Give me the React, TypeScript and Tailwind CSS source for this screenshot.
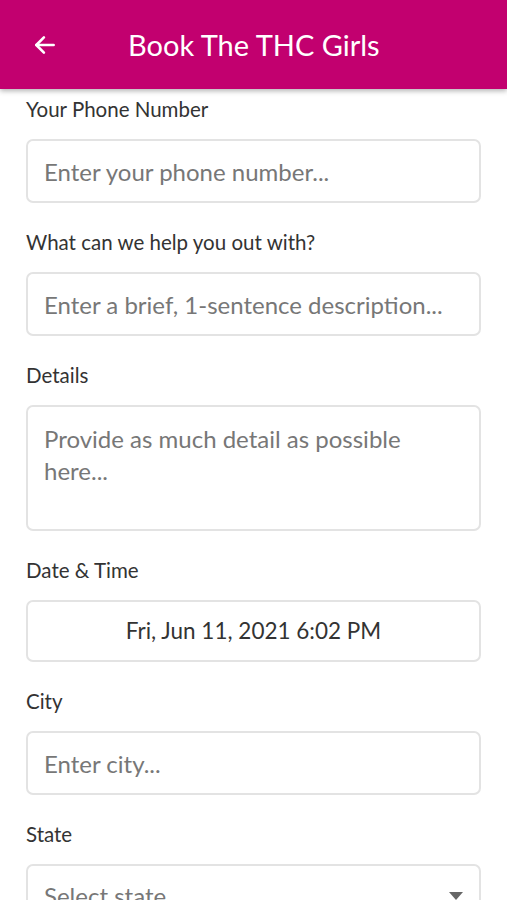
import React from 'react';

const Label: React.FC<{ children: React.ReactNode }> = ({ children }) => (
  <div className="text-[20.5px] leading-[26px] text-[#333]">{children}</div>
);

const TextField: React.FC<{ placeholder: string }> = ({ placeholder }) => (
  <input
    type="text"
    placeholder={placeholder}
    className="mt-[17px] h-[64px] w-full rounded-[7px] border-2 border-[#e3e3e3] bg-white px-[16px] text-[24px] text-[#333] placeholder-[#777] outline-none"
  />
);

const App: React.FC = () => {
  return (
    <div className="h-[900px] w-[507px] overflow-hidden bg-white font-['Lato',sans-serif]">
      <header className="relative z-10 flex h-[89px] items-center bg-[#c2006f] shadow-[0_2px_5px_rgba(0,0,0,0.3)]">
        <button className="ml-[31px] flex h-[28px] w-[28px] items-center justify-center text-white">
          <svg width="26" height="26" viewBox="0 0 24 24" fill="none" stroke="currentColor" strokeWidth="2.4" strokeLinecap="round" strokeLinejoin="round">
            <path d="M20 12H4" />
            <path d="M11 5l-7 7 7 7" />
          </svg>
        </button>
        <h1 className="ml-[69px] text-[29px] text-white">Book The THC Girls</h1>
      </header>

      <div className="px-[26px] pt-[7px]">
        <Label>Your Phone Number</Label>
        <TextField placeholder="Enter your phone number..." />

        <div className="mt-[26px]">
          <Label>What can we help you out with?</Label>
          <TextField placeholder="Enter a brief, 1-sentence description..." />
        </div>

        <div className="mt-[26px]">
          <Label>Details</Label>
          <textarea
            placeholder="Provide as much detail as possible here..."
            className="mt-[17px] block h-[126px] w-full resize-none rounded-[7px] border-2 border-[#e3e3e3] bg-white px-[16px] pt-[16px] pr-[40px] text-[24px] leading-[32px] text-[#333] placeholder-[#777] outline-none"
          />
        </div>

        <div className="mt-[26px]">
          <Label>Date &amp; Time</Label>
          <button className="mt-[17px] flex h-[62px] w-full items-center justify-center rounded-[7px] border-2 border-[#e3e3e3] bg-white text-[22.5px] text-[#333]">
            Fri, Jun 11, 2021 6:02 PM
          </button>
        </div>

        <div className="mt-[26px]">
          <Label>City</Label>
          <TextField placeholder="Enter city..." />
        </div>

        <div className="mt-[26px]">
          <Label>State</Label>
          <div className="relative mt-[17px] flex h-[64px] w-full items-center rounded-[7px] border-2 border-[#e3e3e3] bg-white px-[16px]">
            <span className="text-[24px] text-[#777]">Select state...</span>
            <svg className="absolute right-[16px] top-[26px]" width="14" height="8" viewBox="0 0 14 8">
              <path d="M0 0h14L7 8z" fill="#666" />
            </svg>
          </div>
        </div>
      </div>
    </div>
  );
};

export default App;
